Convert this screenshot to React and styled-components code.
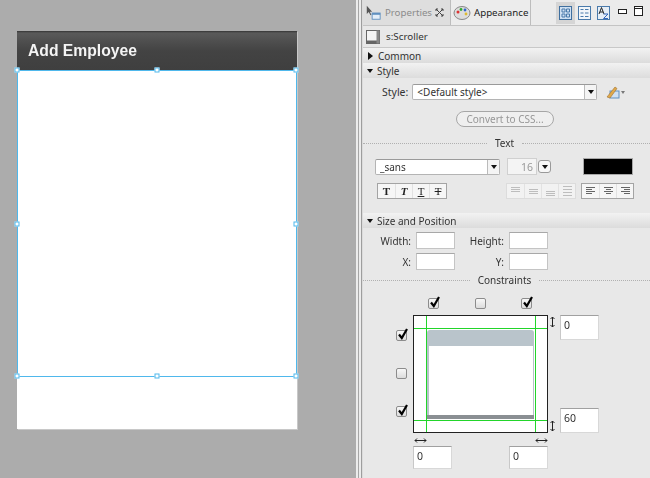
import React from "react";
import styled, { createGlobalStyle } from "styled-components";

const Global = createGlobalStyle`
  html, body { margin: 0; padding: 0; width: 650px; height: 478px; overflow: hidden; background: #acacac; }
  * { box-sizing: border-box; }
`;
const Page = styled.div`
  width: 650px; height: 478px; display: flex; overflow: hidden;
  font-family: "Noto Sans", "Liberation Sans", sans-serif; font-size: 10px; color: #333;
`;
const Canvas = styled.div`
  width: 356px; flex: none; background: #acacac; padding: 31px 0 0 17px;
`;
const Artboard = styled.div`
  width: 280px; height: 398px; background: #fff; display: flex; flex-direction: column;
  box-shadow: 1px 1px 0 #c8c8c8;
`;
const Header = styled.div`
  height: 39px; flex: none; display: flex; align-items: center; padding: 0 0 0 11px;
  background: linear-gradient(#343434 0, #5a5a5a 2px, #4f4f4f 10px, #434343 20px, #3f3f3f 100%);
  font: bold 15.7px "Liberation Sans", sans-serif; color: #f4f4f4; filter: blur(0.25px);
`;
const Scroller = styled.div`
  position: relative; height: 307px; flex: none; background: #fff; border: 1px solid #4fb8ec;
`;
const Handle = styled.span`
  position: absolute; width: 5px; height: 5px; background: #fff; border: 1px solid #4fb8ec;
  left: ${p => p.$x}; top: ${p => p.$y}; transform: translate(-50%, -50%);
`;
const Splitter = styled.div`
  width: 6px; flex: none;
  background: linear-gradient(90deg, #ececec 0 2px, #a6a6a6 2px 3px, #ececec 3px 5px, #9e9e9e 5px 6px);
`;
const Panel = styled.div`
  flex: 1; min-width: 0; background: #e8e8e8; border-left: 1px solid #dcdcdc; display: flex; flex-direction: column; filter: blur(0.3px);
`;
const TabBar = styled.div`
  height: 26px; flex: none; display: flex; align-items: stretch; background: #ebebeb;
  border-bottom: 1px solid #c4c4c4;
`;
const Tab = styled.div`
  width: ${p => p.$w}px; flex: none; display: flex; align-items: center; gap: 3px; padding-left: 2px;
  border-right: 1px solid #bdbdbd; font-size: 9.7px; color: ${p => p.$active ? "#222" : "#8b8b8b"};
  background: ${p => p.$active ? "#ececec" : "#dedede"};
`;
const TabClose = styled.span`margin-left: auto; margin-right: 6px; display: flex;`;
const ToolGroup = styled.div`
  margin-left: 25px; display: flex; align-items: center; gap: 0;
`;
const ToolButton = styled.div`
  width: 19px; height: 22px; display: flex; align-items: center; justify-content: center;
  background: ${p => p.$on ? "#d5d5d5" : "transparent"};
`;
const WindowGroup = styled.div`margin-left: 5px; display: flex; align-items: center; gap: 7px; height: 20px; margin-top: 1px;`;
const Title = styled.div`
  height: 22px; flex: none; display: flex; align-items: center; gap: 6px; padding-left: 3px;
  font-size: 9.8px; border-bottom: 1px solid #c8c8c8;
`;
const Section = styled.div`
  height: 15px; flex: none; display: flex; align-items: center; gap: 4px; padding-left: 4px;
  background: linear-gradient(#f2f2f2, #dcdcdc); font-size: 10px; color: #333; margin-top: ${p => p.$mt || 0}px;
`;
const Tri = styled.span`
  width: 0; height: 0; flex: none;
  ${p => p.$open
    ? "border-left: 3.5px solid transparent; border-right: 3.5px solid transparent; border-top: 4px solid #111;"
    : "margin: 0 1px 0 1px; border-top: 4px solid transparent; border-bottom: 4px solid transparent; border-left: 5px solid #111;"}
`;
const StyleRow = styled.div`
  height: 20px; margin-top: 4px; display: flex; align-items: center; padding-left: 19px; gap: 4px; font-size: 10.5px;
`;
const Select = styled.div`
  width: ${p => p.$w}px; height: 16px; flex: none; background: #fff; border: 1px solid #b4b4b4; border-top-color: #9a9a9a;
  border-radius: 2px; display: flex; align-items: center; padding-left: 4px; font-size: 10px; color: #333;
`;
const SelectArrow = styled.span`
  margin-left: auto; width: 12px; height: 100%; display: flex; align-items: center; justify-content: center;
  border-left: 1px solid #bbb; background: #f4f4f4; border-radius: 0 2px 2px 0;
`;
const Caret = styled.span`
  width: 0; height: 0; border-left: 3px solid transparent; border-right: 3px solid transparent; border-top: 4px solid #111;
`;
const ConvertRow = styled.div`
  height: 16px; margin-top: 9px; display: flex; justify-content: center; padding-right: 3px;
`;
const Pill = styled.div`
  width: 98px; height: 16px; border: 1px solid #a6a6a6; border-radius: 8px; background: #efefef; color: #979797;
  display: flex; align-items: center; justify-content: center; font-size: 10px;
`;
const Separator = styled.div`
  height: 14px; margin-top: ${p => p.$mt || 0}px; display: flex; align-items: center; gap: 8px; font-size: 10px; color: #333;
  &::before, &::after { content: ""; flex: 1; border-top: 1px dotted #b0b0b0; }
  &::after { padding-left: 4px; }
`;
const FontRow = styled.div`
  height: 17px; margin-top: 8px; display: flex; align-items: center; padding-left: 12px;
`;
const Num = styled.div`
  margin-left: 7px; width: 30px; height: 17px; border: 1px solid #d0d0d0; background: #f4f4f4; color: #999; display: flex;
  align-items: center; justify-content: flex-end; padding-right: 3px; font-size: 10.5px;
`;
const SpinBtn = styled.div`
  margin-left: 1px; width: 13px; height: 13px; border: 1px solid #999; border-radius: 3px; background: #f7f7f7;
  display: flex; align-items: center; justify-content: center;
`;
const Swatch = styled.div`
  margin-left: 32px; width: 50px; height: 17px; background: #000; border: 1px solid #a8a8a8;
`;
const FormatRow = styled.div`
  height: 16px; margin-top: 8px; display: flex; align-items: center; padding-left: 14px;
`;
const BtnGroup = styled.div`
  display: flex; margin-left: ${p => p.$ml || 0}px; border: 1px solid ${p => p.$off ? "#dcdcdc" : "#a4a4a4"};
  background: ${p => p.$off ? "#f2f2f2" : "#f6f6f6"};
`;
const FmtBtn = styled.div`
  width: ${p => p.$w || 17}px; height: 14px; display: flex; align-items: center; justify-content: center;
  font: ${p => p.$font || "bold 11px"} "Liberation Serif", serif; color: #222; text-decoration: ${p => p.$deco || "none"};
  & + & { border-left: 1px solid ${p => p.$off ? "#e2e2e2" : "#b0b0b0"}; }
`;
const FieldGrid = styled.div`
  display: grid; grid-template-columns: 43px 39px 54px 39px; grid-auto-rows: 17px; row-gap: 4px;
  padding-left: 10px; margin-top: 4px; align-items: center;
`;
const FieldLabel = styled.div`text-align: right; padding-right: 5px; font-size: 10px; color: #333;`;
const Field = styled.div`
  height: 17px; background: #fff; border: 1px solid #c4c4c4; border-top-color: #a8a8a8;
  font-size: 10.5px; color: #333; padding: 1px 0 0 3px;
`;
const Constraints = styled.div`
  display: grid; grid-template-columns: 50px 135px 12px 39px; grid-template-rows: 17px 118px 13px 24px;
  padding-top: 11px;
`;
const TopChecks = styled.div`
  grid-column: 2; grid-row: 1; display: flex; justify-content: space-between; align-items: flex-start; padding: 0 16px 0 15px;
`;
const LeftChecks = styled.div`
  grid-column: 1; grid-row: 2; display: flex; flex-direction: column; justify-content: space-between;
  align-items: flex-end; padding: 15px 6px 16px 0;
`;
const Check = styled.div`
  width: 11px; height: 11px; position: relative; border-radius: 2px; background: linear-gradient(#f8f8f8, #dcdcdc); border: 1px solid #8c8c8c;
`;
const Tick = styled.svg`position: absolute; left: 0; top: -3px; overflow: visible;`;
const Diagram = styled.svg`grid-column: 2; grid-row: 2; display: block;`;
const VArrows = styled.div`
  grid-column: 3; grid-row: 2; display: flex; flex-direction: column; justify-content: space-between; align-items: center; padding: 1px 3px 1px 0;
`;
const RightInputs = styled.div`
  grid-column: 4; grid-row: 2; display: flex; flex-direction: column; justify-content: space-between;
`;
const HArrows = styled.div`
  grid-column: 2; grid-row: 3; display: flex; justify-content: space-between; align-items: flex-end; padding: 0 0 0 1px; height: 10px;
`;
const BottomInputs = styled.div`
  grid-column: 2; grid-row: 4; display: flex; justify-content: space-between;
`;
const BoxInput = styled.div`
  width: 39px; height: ${p => p.$h || 25}px; background: #fff; border: 1px solid #d8d8d8; border-top-color: #a0a0a0; border-left-color: #c8c8c8;
  font-size: 10.5px; color: #333; padding: 2px 0 0 3px;
`;

const TickMark = () => (
  <Tick width="11" height="12" viewBox="0 0 11 12">
    <path d="M2 6.5 L4.8 10 L10 1" fill="none" stroke="#000" strokeWidth="2.2" />
  </Tick>
);
const Cb = ({ on }) => <Check>{on && <TickMark />}</Check>;
const ArrowV = () => (
  <svg width="5" height="12" viewBox="0 0 5 12"><path d="M2.5 1V11M.5 3l2-2 2 2M.5 9l2 2 2-2" fill="none" stroke="#222" strokeWidth="1" /></svg>
);
const ArrowH = () => (
  <svg width="13" height="5" viewBox="0 0 13 5"><path d="M1 2.5H12M3 .5l-2 2 2 2M10 .5l2 2-2 2" fill="none" stroke="#222" strokeWidth="1" /></svg>
);
const HAlignLines = ({ kind }) => (
  <svg width="11" height="10" viewBox="0 0 11 10">
    {[1.5, 3.5, 5.5, 7.5].map((y, i) => {
      let x1 = 1, x2 = 10;
      if (i % 2) {
        if (kind === "c") { x1 = 3; x2 = 8; }
        if (kind === "l") { x2 = 7; }
        if (kind === "r") { x1 = 4; }
      }
      return <line key={y} x1={x1} x2={x2} y1={y} y2={y} stroke="#666" strokeWidth="1" />;
    })}
  </svg>
);
const VAlignLines = ({ ys }) => (
  <svg width="11" height="10" viewBox="0 0 11 10">
    {ys.map(y => <line key={y} x1="1" x2="10" y1={y} y2={y} stroke="#bdbdbd" strokeWidth="1" />)}
  </svg>
);

export default function App() {
  return (
    <Page>
      <Global />
      <Canvas>
        <Artboard>
          <Header>Add Employee</Header>
          <Scroller>
            <Handle $x="-1px" $y="-1px" /><Handle $x="50%" $y="-1px" /><Handle $x="100%" $y="-1px" />
            <Handle $x="-1px" $y="50%" /><Handle $x="100%" $y="50%" />
            <Handle $x="-1px" $y="100%" /><Handle $x="50%" $y="100%" /><Handle $x="100%" $y="100%" />
          </Scroller>
        </Artboard>
      </Canvas>
      <Splitter />
      <Panel>
        <TabBar>
          <Tab $w={88}>
            <svg width="19" height="18" viewBox="0 0 19 18">
              <path d="M2 1v9l2.2-2 2 3.5 1-.6-1.8-3.4H8z" fill="#555" />
              <rect x="8" y="9" width="9" height="7" fill="#e4eef8" stroke="#5f8fbf" />
              <rect x="8" y="9" width="9" height="2" fill="#5f8fbf" />
            </svg>
            <span>Properties</span>
            <TabClose>
              <svg width="9" height="9" viewBox="0 0 9 9"><path d="M1 1l7 7M8 1L1 8M1 3V1h2M6 1h2v2M8 6v2H6M3 8H1V6" fill="none" stroke="#444" strokeWidth="1" /></svg>
            </TabClose>
          </Tab>
          <Tab $w={80} $active>
            <svg width="18" height="16" viewBox="0 0 18 16">
              <ellipse cx="9" cy="8" rx="8" ry="6.5" fill="#ddd" stroke="#888" />
              <circle cx="5" cy="7" r="1.5" fill="#d33" /><circle cx="8" cy="4.5" r="1.4" fill="#3a3" />
              <circle cx="12" cy="5" r="1.4" fill="#36c" /><circle cx="13" cy="9" r="1.4" fill="#db3" />
            </svg>
            <span>Appearance</span>
          </Tab>
          <ToolGroup>
            <ToolButton $on>
              <svg width="13" height="14" viewBox="0 0 13 14"><rect x=".5" y=".5" width="12" height="13" fill="#cfe0f2" stroke="#3f6f9f" /><path d="M3 3h3v3H3zM7.5 3h3v3h-3zM3 8h3v3H3zM7.5 8h3v3h-3z" fill="none" stroke="#4a7aab" /></svg>
            </ToolButton>
            <ToolButton>
              <svg width="13" height="14" viewBox="0 0 13 14"><rect x=".5" y=".5" width="12" height="13" fill="#f2f6fa" stroke="#4a7aab" /><path d="M2.5 3.5h3M2.5 7h3M2.5 10.5h3M7 3.5h3.5M7 7h3.5M7 10.5h3.5" stroke="#4a7aab" /></svg>
            </ToolButton>
            <ToolButton>
              <svg width="13" height="14" viewBox="0 0 13 14"><rect x=".5" y=".5" width="12" height="13" fill="#e6eef6" stroke="#4a7aab" /><path d="M2 8l2.5-6.5L7 8M3 6h3" fill="none" stroke="#222" /><path d="M6.5 8h4.5l-4.5 4.5H11" fill="none" stroke="#36b" /></svg>
            </ToolButton>
          </ToolGroup>
          <WindowGroup>
            <svg width="9" height="5" viewBox="0 0 9 5"><rect x=".5" y=".5" width="8" height="4" fill="#fff" stroke="#222" /></svg>
            <svg width="9" height="10" viewBox="0 0 9 10"><rect x=".5" y=".5" width="8" height="9" fill="#fff" stroke="#222" /><path d="M0 2.5h9" stroke="#222" /></svg>
          </WindowGroup>
        </TabBar>
        <Title>
          <svg width="14" height="14" viewBox="0 0 14 14"><rect x=".5" y=".5" width="13" height="13" fill="#f4f4f4" stroke="#666" /><rect x=".5" y="10.5" width="13" height="3" fill="#666" /><rect x="10.5" y=".5" width="3" height="13" fill="#888" /></svg>
          <span>s:Scroller</span>
        </Title>
        <Section><Tri />Common</Section>
        <Section><Tri $open />Style</Section>
        <StyleRow>
          <span>Style:</span>
          <Select $w={185}>&lt;Default style&gt;<SelectArrow><Caret /></SelectArrow></Select>
          <svg style={{ marginLeft: 4 }} width="22" height="14" viewBox="0 0 22 14">
            <rect x="5" y="6" width="9" height="7" fill="#cfe0f2" stroke="#5f8fbf" />
            <path d="M2 12L10 2l2 1.5L5 13z" fill="#e0a94a" stroke="#a07030" strokeWidth=".6" />
            <path d="M16 6h4l-2 3z" fill="#777" />
          </svg>
        </StyleRow>
        <ConvertRow><Pill>Convert to CSS...</Pill></ConvertRow>
        <Separator $mt={9}>Text</Separator>
        <FontRow>
          <Select $w={125}>_sans<SelectArrow><Caret /></SelectArrow></Select>
          <Num>16</Num>
          <SpinBtn><Caret /></SpinBtn>
          <Swatch />
        </FontRow>
        <FormatRow>
          <BtnGroup>
            <FmtBtn>T</FmtBtn>
            <FmtBtn $font="italic bold 11px">T</FmtBtn>
            <FmtBtn $font="11px" $deco="underline">T</FmtBtn>
            <FmtBtn $font="11px" $deco="line-through">T</FmtBtn>
          </BtnGroup>
          <BtnGroup $ml={59} $off>
            <FmtBtn $off><VAlignLines ys={[1.5, 3.5, 5.5]} /></FmtBtn>
            <FmtBtn $off><VAlignLines ys={[3.5, 5.5, 7.5]} /></FmtBtn>
            <FmtBtn $off><VAlignLines ys={[5.5, 7.5, 9.5]} /></FmtBtn>
            <FmtBtn $off><VAlignLines ys={[.5, 3.5, 6.5, 9.5]} /></FmtBtn>
          </BtnGroup>
          <BtnGroup $ml={5}>
            <FmtBtn><HAlignLines kind="l" /></FmtBtn><FmtBtn><HAlignLines kind="c" /></FmtBtn><FmtBtn><HAlignLines kind="r" /></FmtBtn>
          </BtnGroup>
        </FormatRow>
        <Section $mt={14}><Tri $open />Size and Position</Section>
        <FieldGrid>
          <FieldLabel>Width:</FieldLabel><Field />
          <FieldLabel>Height:</FieldLabel><Field />
          <FieldLabel>X:</FieldLabel><Field />
          <FieldLabel>Y:</FieldLabel><Field />
        </FieldGrid>
        <Separator $mt={3}>Constraints</Separator>
        <Constraints>
          <TopChecks><Cb on /><Cb /><Cb on /></TopChecks>
          <LeftChecks><Cb on /><Cb /><Cb on /></LeftChecks>
          <Diagram width="135" height="118" viewBox="0 0 135 118">
            <rect x=".5" y=".5" width="134" height="117" fill="#fff" stroke="#222" />
            <rect x="14" y="15" width="107" height="89" rx="3" fill="#b9c4cb" />
            <rect x="16" y="31" width="104" height="69" fill="#fff" />
            <rect x="14" y="100" width="107" height="4" fill="#8a8f93" />
            <path d="M13.5 1V117M122.5 1V117M1 13.5H134M1 105.5H134" stroke="#22d52a" strokeWidth="1" />
          </Diagram>
          <VArrows><ArrowV /><ArrowV /></VArrows>
          <RightInputs><BoxInput>0</BoxInput><BoxInput>60</BoxInput></RightInputs>
          <HArrows><ArrowH /><ArrowH /></HArrows>
          <BottomInputs><BoxInput $h={23}>0</BoxInput><BoxInput $h={23}>0</BoxInput></BottomInputs>
        </Constraints>
      </Panel>
    </Page>
  );
}
